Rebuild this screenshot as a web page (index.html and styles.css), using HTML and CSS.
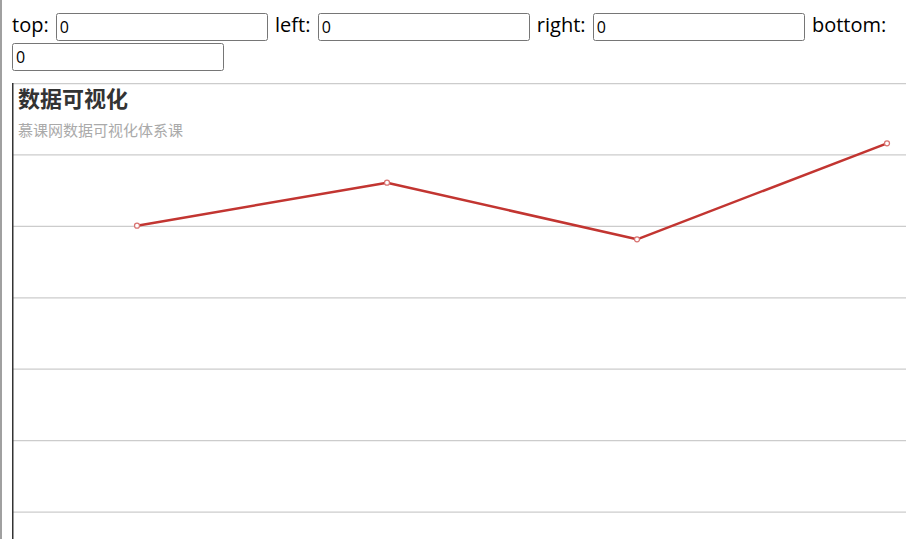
FILE: index.html
```html
<!DOCTYPE html>
<html lang="zh-CN">
<head>
  <meta charset="UTF-8">
  <title>数据可视化</title>
  <link rel="stylesheet" href="styles.css">
</head>
<body>
  <div class="controls">
    top: <input type="text" class="offset" value="0">
    left: <input type="text" class="offset" value="0">
    right: <input type="text" class="offset" value="0">
    bottom: <input type="text" class="offset" value="0">
  </div>

  <div class="chart">
    <svg width="1000" height="500" viewBox="0 0 1000 500">
      <g class="grid">
        <line x1="0" y1="0.5" x2="1000" y2="0.5"></line>
        <line x1="0" y1="71.9" x2="1000" y2="71.9"></line>
        <line x1="0" y1="143.4" x2="1000" y2="143.4"></line>
        <line x1="0" y1="214.8" x2="1000" y2="214.8"></line>
        <line x1="0" y1="286.2" x2="1000" y2="286.2"></line>
        <line x1="0" y1="357.6" x2="1000" y2="357.6"></line>
        <line x1="0" y1="429.1" x2="1000" y2="429.1"></line>
      </g>
      <line class="y-axis" x1="0.75" y1="0" x2="0.75" y2="500"></line>

      <text class="title" x="6" y="24">数据可视化</text>
      <text class="subtitle" x="6" y="53">慕课网数据可视化体系课</text>

      <polyline class="series" points="125,142.7 375,99.7 625,156.3 875,60.3"></polyline>
      <circle class="dot" cx="125" cy="142.7" r="2.5"></circle>
      <circle class="dot" cx="375" cy="99.7" r="2.5"></circle>
      <circle class="dot" cx="625" cy="156.3" r="2.5"></circle>
      <circle class="dot" cx="875" cy="60.3" r="2.5"></circle>
    </svg>
  </div>
</body>
</html>
```

FILE: styles.css
```css
html {
  overflow: hidden;
}
body {
  margin: 0;
  padding: 10px 0 0 10px;
  border-left: 2px solid #a0a0a0;
  min-height: 539px;
  box-sizing: border-box;
  font-family: "Open Sans", "Noto Sans", sans-serif;
}
.controls {
  font-size: 20px;
  line-height: 30px;
  word-spacing: 2px;
  color: #000;
}
.offset {
  width: 212px;
  height: 28px;
  box-sizing: border-box;
  padding: 1px 3px;
  border: 1px solid #767676;
  border-radius: 2.5px;
  font-family: "Open Sans", "Noto Sans", sans-serif;
  font-size: 16px;
  vertical-align: middle;
}
.chart {
  margin-top: 12px;
  height: 500px;
  overflow: hidden;
}
.chart svg {
  display: block;
}
.grid line {
  stroke: #ccc;
  stroke-width: 1.25;
}
.y-axis {
  stroke: #333;
  stroke-width: 1.5;
}
.title {
  font-family: "Noto Sans CJK SC", sans-serif;
  font-size: 22px;
  font-weight: bold;
  fill: #333;
}
.subtitle {
  font-family: "Noto Sans CJK SC", sans-serif;
  font-size: 15px;
  fill: #aaa;
}
.series {
  fill: none;
  stroke: #c23531;
  stroke-width: 2.5;
  stroke-linejoin: round;
}
.dot {
  fill: #fff;
  stroke: #d87270;
  stroke-width: 1.25;
}
```
